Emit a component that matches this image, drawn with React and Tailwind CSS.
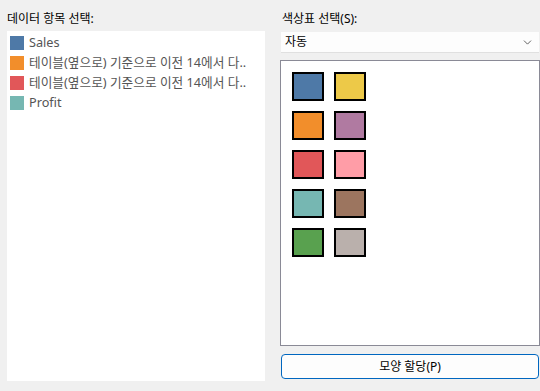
import { ChevronDown } from "lucide-react";

const fields = [
  { name: "Sales", color: "bg-[#4e79a7]" },
  { name: "테이블(옆으로) 기준으로 이전 14에서 다..", color: "bg-[#f28e2b]" },
  { name: "테이블(옆으로) 기준으로 이전 14에서 다..", color: "bg-[#e15759]" },
  { name: "Profit", color: "bg-[#76b7b2]" },
];

const palette = [
  ["bg-[#4e79a7]", "bg-[#edc948]"],
  ["bg-[#f28e2b]", "bg-[#b07aa1]"],
  ["bg-[#e15759]", "bg-[#ff9da7]"],
  ["bg-[#76b7b2]", "bg-[#9c755f]"],
  ["bg-[#59a14f]", "bg-[#bab0ac]"],
];

export default function App() {
  return (
    <div
      className="w-[540px] h-[391px] bg-[#f0f0f0] flex text-[12px] text-black"
      style={{ fontFamily: '"Noto Sans", "Noto Sans CJK KR", sans-serif' }}
    >
      {/* left - data items */}
      <div className="w-[280px] pl-[7px] pr-[15px] pt-[10px] pb-[10px] flex flex-col">
        <div className="h-[21px] leading-[18px]">데이터 항목 선택:</div>
        <div className="flex-1 bg-white pt-[2px] pl-[3px]">
          {fields.map((f, i) => (
            <div key={i} className="flex items-center h-[20px]">
              <span className={`w-[14px] h-[14px] ${f.color}`}></span>
              <span className="ml-[5px] text-[12.7px] text-[#555] whitespace-nowrap">{f.name}</span>
            </div>
          ))}
        </div>
      </div>

      {/* right - palette */}
      <div className="flex-1 pl-[1px] pt-[10px] pb-[12px] flex flex-col">
        <div className="h-[22px] leading-[18px] pl-[1px]">
          색상표 선택(<span>S</span>):
        </div>
        <div className="h-[21px] bg-[#fdfdfd] border-b border-[#e0e0e0] flex items-center pl-[4px] pr-[5px] mr-[1px]">
          <span className="flex-1">자동</span>
          <ChevronDown size={13} strokeWidth={1.4} className="text-[#333]" />
        </div>
        <div className="mt-[7px] flex-1 -ml-[1px] bg-white border border-[#8a8a96] pt-[11px] pl-[11px] flex flex-col gap-[10px]">
          {palette.map((row, i) => (
            <div key={i} className="flex gap-[10px]">
              {row.map((c, j) => (
                <span key={j} className={`w-[32px] h-[29px] border-2 border-black ${c}`}></span>
              ))}
            </div>
          ))}
        </div>
        <button className="mt-[8px] h-[25px] mr-[1px] bg-[#fdfdfd] border border-[#0067c0] rounded-[4px] text-[12px]">
          모양 할당(P)
        </button>
      </div>
    </div>
  );
}
